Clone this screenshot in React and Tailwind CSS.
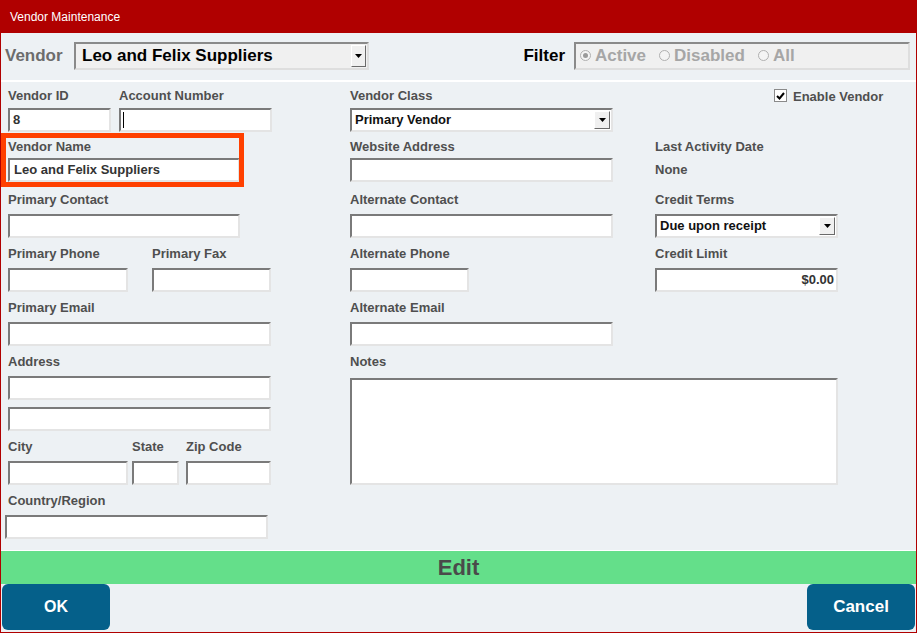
import React from 'react';

const sunken = 'bg-white border-2 border-t-[#7a7a7a] border-l-[#7a7a7a] border-r-[#e4e4e4] border-b-[#e4e4e4]';

const Label = ({ children, className = '' }) => (
  <div className={`relative top-px h-4 text-[13px] font-bold leading-4 text-[#4f4f4f] whitespace-nowrap ${className}`}>{children}</div>
);

const Arrow = () => (
  <svg width="7" height="4" viewBox="0 0 7 4">
    <path d="M0 0h7L3.5 4z" fill="#000" />
  </svg>
);

const DropButton = ({ className = '' }) => (
  <div className={`flex items-center justify-center bg-[#f0f0f0] border border-t-white border-l-white border-r-[#6a6a6a] border-b-[#6a6a6a] ${className}`}>
    <Arrow />
  </div>
);

const Box = ({ className = '', children }) => (
  <div className={`h-6 flex items-center ${sunken} ${className}`}>{children}</div>
);

const Select = ({ value, className = '' }) => (
  <div className={`h-6 flex items-center justify-between pl-[3px] pr-[1px] ${sunken} ${className}`}>
    <span className="text-[13px] font-bold text-[#111]">{value}</span>
    <DropButton className="w-[16px] h-[18px]" />
  </div>
);

const Radio = ({ checked, label }) => (
  <div className="flex items-center gap-[4px]">
    <span className="w-[11px] h-[11px] rounded-full border border-[#b0b0b0] bg-[#f4f4f4] flex items-center justify-center">
      {checked && <span className="w-[5px] h-[5px] rounded-full bg-[#9a9a9a]" />}
    </span>
    <span className="text-[17px] font-bold text-[#a6a6a6]">{label}</span>
  </div>
);

export default function App() {
  return (
    <div className="w-[917px] h-[633px] flex flex-col bg-[#edf1f4] border-x border-b border-[#b00000] font-['Liberation_Sans',Arial,sans-serif] overflow-hidden">
      {/* title bar */}
      <div className="h-[33px] shrink-0 bg-[#b00000] flex items-center pl-[10px] -mx-px">
        <span className="text-[12px] text-white">Vendor Maintenance</span>
      </div>

      {/* vendor picker + filter */}
      <div className="h-[49px] shrink-0 flex items-center pl-[4px] pr-[6px] pb-[2px] border-b-2 border-white">
        <span className="text-[17px] font-bold text-[#6c6c6c] w-[69px]">Vendor</span>
        <div className="w-[295px] h-[28px] flex items-center justify-between pl-[6px] pr-[1px] bg-[#f0f0f0] border-2 border-t-[#8a8a8a] border-l-[#8a8a8a] border-r-[#dedede] border-b-[#dedede]">
          <span className="text-[17px] font-bold text-black">Leo and Felix Suppliers</span>
          <DropButton className="w-[15px] h-[22px]" />
        </div>
        <div className="flex-1" />
        <span className="text-[17px] font-bold text-black mr-[9px]">Filter</span>
        <div className="w-[336px] h-[28px] flex items-center gap-[13px] pl-[4px] bg-[#f0f0f0] border-2 border-t-[#8a8a8a] border-l-[#8a8a8a] border-r-[#dedede] border-b-[#dedede]">
          <Radio checked label="Active" />
          <Radio label="Disabled" />
          <Radio label="All" />
        </div>
      </div>

      {/* form */}
      <div className="flex-1 pt-[5px] pl-[7px]">
        <div className="grid grid-cols-[342px_305px_1fr] grid-rows-[51px_53px_54px_54px_54px_85px_54px_47px]">
          {/* row 1 */}
          <div className="flex gap-2">
            <div>
              <Label>Vendor ID</Label>
              <Box className="mt-[5px] w-[103px] pl-[3px]">
                <span className="text-[13px] font-bold text-[#333]">8</span>
              </Box>
            </div>
            <div>
              <Label>Account Number</Label>
              <Box className="mt-[5px] w-[153px] pl-[2px]">
                <span className="w-px h-[16px] bg-black" />
              </Box>
            </div>
          </div>
          <div>
            <Label>Vendor Class</Label>
            <Select value="Primary Vendor" className="mt-[5px] w-[263px]" />
          </div>
          <div className="flex items-start pt-[2px] pl-[119px]">
            <span className="w-[13px] h-[13px] bg-white border border-[#8a8a8a] flex items-center justify-center">
              <svg width="9" height="8" viewBox="0 0 9 8">
                <path d="M1 4l2.5 2.5L8 1" fill="none" stroke="#000" strokeWidth="2" />
              </svg>
            </span>
            <Label className="ml-[6px] -mt-[1px]">Enable Vendor</Label>
          </div>

          {/* row 2 */}
          <div className="relative">
            <Label>Vendor Name</Label>
            <Box className="mt-1 w-[232px] pl-[4px]">
              <span className="text-[13px] font-bold text-[#333]">Leo and Felix Suppliers</span>
            </Box>
            <div className="absolute left-[-7px] top-[-5px] w-[243px] h-[54px] border-[5px] border-[#ff4000] pointer-events-none" />
          </div>
          <div>
            <Label>Website Address</Label>
            <Box className="mt-1 w-[263px]" />
          </div>
          <div>
            <Label>Last Activity Date</Label>
            <Label className="mt-[7px]">None</Label>
          </div>

          {/* row 3 */}
          <div>
            <Label>Primary Contact</Label>
            <Box className="mt-[7px] w-[232px]" />
          </div>
          <div>
            <Label>Alternate Contact</Label>
            <Box className="mt-[7px] w-[263px]" />
          </div>
          <div>
            <Label>Credit Terms</Label>
            <Select value="Due upon receipt" className="mt-[7px] w-[183px]" />
          </div>

          {/* row 4 */}
          <div className="flex gap-[24px]">
            <div>
              <Label>Primary Phone</Label>
              <Box className="mt-[7px] w-[120px]" />
            </div>
            <div>
              <Label>Primary Fax</Label>
              <Box className="mt-[7px] w-[119px]" />
            </div>
          </div>
          <div>
            <Label>Alternate Phone</Label>
            <Box className="mt-[7px] w-[119px]" />
          </div>
          <div>
            <Label>Credit Limit</Label>
            <Box className="mt-[7px] w-[183px] justify-end pr-[2px]">
              <span className="text-[13px] font-bold text-[#333]">$0.00</span>
            </Box>
          </div>

          {/* row 5 */}
          <div>
            <Label>Primary Email</Label>
            <Box className="mt-[7px] w-[263px]" />
          </div>
          <div>
            <Label>Alternate Email</Label>
            <Box className="mt-[7px] w-[263px]" />
          </div>
          <div />

          {/* row 6 */}
          <div>
            <Label>Address</Label>
            <Box className="mt-[7px] w-[263px]" />
            <Box className="mt-[7px] w-[263px]" />
          </div>
          <div className="col-span-2 row-span-2">
            <Label>Notes</Label>
            <div className={`mt-[9px] w-[488px] h-[107px] ${sunken}`} />
          </div>

          {/* row 7 */}
          <div className="flex">
            <div>
              <Label>City</Label>
              <Box className="mt-[7px] w-[120px]" />
            </div>
            <div className="ml-[4px]">
              <Label>State</Label>
              <Box className="mt-[7px] w-[47px]" />
            </div>
            <div className="ml-[7px]">
              <Label>Zip Code</Label>
              <Box className="mt-[7px] w-[85px]" />
            </div>
          </div>

          {/* row 8 */}
          <div>
            <Label>Country/Region</Label>
            <Box className="mt-[7px] -ml-[3px] w-[263px]" />
          </div>
        </div>
      </div>

      {/* mode bar */}
      <div className="h-[34px] shrink-0 border-t border-white bg-[#64df8a] flex items-center justify-center">
        <span className="text-[22px] font-bold text-[#4a4a4a]">Edit</span>
      </div>

      {/* buttons */}
      <div className="h-[48px] shrink-0 flex justify-between items-start px-px">
        <button className="w-[108px] h-[46px] rounded-md bg-[#05608a] text-white text-[16px] font-bold">OK</button>
        <button className="w-[108px] h-[46px] rounded-md bg-[#05608a] text-white text-[17px] font-bold">Cancel</button>
      </div>
    </div>
  );
}
